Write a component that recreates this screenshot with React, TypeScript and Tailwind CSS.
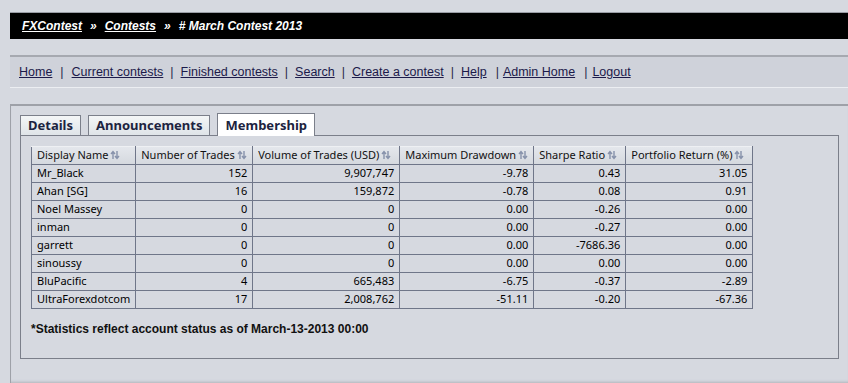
import React from 'react'

const rows = [
  ['Mr_Black', '152', '9,907,747', '-9.78', '0.43', '31.05'],
  ['Ahan [SG]', '16', '159,872', '-0.78', '0.08', '0.91'],
  ['Noel Massey', '0', '0', '0.00', '-0.26', '0.00'],
  ['inman', '0', '0', '0.00', '-0.27', '0.00'],
  ['garrett', '0', '0', '0.00', '-7686.36', '0.00'],
  ['sinoussy', '0', '0', '0.00', '0.00', '0.00'],
  ['BluPacific', '4', '665,483', '-6.75', '-0.37', '-2.89'],
  ['UltraForexdotcom', '17', '2,008,762', '-51.11', '-0.20', '-67.36'],
]

const cols = [
  { label: 'Display Name', w: 'w-[103px]' },
  { label: 'Number of Trades', w: 'w-[117px]' },
  { label: 'Volume of Trades (USD)', w: 'w-[147px]' },
  { label: 'Maximum Drawdown', w: 'w-[134px]' },
  { label: 'Sharpe Ratio', w: 'w-[92px]' },
  { label: 'Portfolio Return (%)', w: 'w-[127px]' },
]

function SortIcon() {
  return (
    <svg width="10" height="10" viewBox="0 0 10 10" className="inline-block ml-[2px] -mt-[3px]">
      <path d="M3 9V2M1 4l2-2.5L5 4" stroke="#8792ab" strokeWidth="1.4" fill="none" />
      <path d="M7 1v7M5 6l2 2.5L9 6" stroke="#8792ab" strokeWidth="1.4" fill="none" />
    </svg>
  )
}

// gaps after each link, the original page spaces them unevenly
const navLinks = [
  { l: 'Home', sep: 'mx-[8px]' },
  { l: 'Current contests', sep: 'mx-[7px]' },
  { l: 'Finished contests', sep: 'mx-[7px]' },
  { l: 'Search', sep: 'mx-[7px]' },
  { l: 'Create a contest', sep: 'mx-[7px]' },
  { l: 'Help', sep: 'ml-[9px] mr-[4px]' },
  { l: 'Admin Home', sep: 'ml-[9px] mr-[5px]' },
  { l: 'Logout', sep: '' },
]

export default function App() {
  return (
    <div className="w-[848px] h-[383px] overflow-hidden bg-[#d6d9e0] pt-3 pl-[10px]" style={{ fontFamily: '"Liberation Sans", Arial, sans-serif' }}>
      {/* breadcrumb bar */}
      <div className="h-[27px] bg-black border-t border-[#9a9da5] flex items-center pl-3 text-white text-[12px] font-bold italic">
        <span className="underline">FXContest</span>
        <span className="mx-[8px]">»</span>
        <span className="underline">Contests</span>
        <span className="mx-[8px]">»</span>
        <span># March Contest 2013</span>
      </div>

      {/* nav */}
      <div className="mt-4 h-[33px] border-t-2 border-[#a6a9b0] border-b border-b-[#eceef2] bg-[#cfd2da] flex items-center pl-[9px] text-[12.5px] text-[#1c1a4a]">
        {navLinks.map((n, i) => (
          <React.Fragment key={n.l}>
            <span className="underline">{n.l}</span>
            {i < navLinks.length - 1 && <span className={`${n.sep} text-[#2a1f4a]`}>|</span>}
          </React.Fragment>
        ))}
      </div>

      {/* main panel */}
      <div className="mt-4 h-[280px] border-t-2 border-l border-[#9ea1a8] bg-[#d6d9e0] pl-[9px] pt-[6px] shadow-[inset_0_-4px_3px_-2px_#b0b3ba]">
        <div className="flex items-end gap-[7px] h-[23px]" style={{ fontFamily: '"Noto Sans", "Open Sans", sans-serif' }}>
          <div className="h-[20px] px-[7px] border border-b-0 border-[#7b7f8a] bg-gradient-to-b from-[#f4f6f7] to-[#dfe4e8] text-[13px] font-bold text-[#1c2340] leading-[19px]">Details</div>
          <div className="h-[20px] px-[7px] border border-b-0 border-[#7b7f8a] bg-gradient-to-b from-[#f4f6f7] to-[#dfe4e8] text-[13px] font-bold text-[#1c2340] leading-[19px]">Announcements</div>
          <div className="h-[23px] px-[7px] border border-b-0 border-[#7b7f8a] bg-white text-[13px] font-bold text-[#1c2340] leading-[23px] relative top-[1px] z-10">Membership</div>
        </div>
        <div className="w-[819px] h-[224px] border border-[#7b7f8a] bg-[#d6d9e0] pl-[10px] pt-[10px]">
          <table className="border-collapse text-[11px] text-black" style={{ fontFamily: '"Noto Sans", "Open Sans", sans-serif' }}>
            <thead>
              <tr className="h-[18px] bg-gradient-to-b from-[#e4e7ec] to-[#d4d8de]">
                {cols.map(c => (
                  <th key={c.label} className={`${c.w} border border-[#6f7689] border-t-[#eef0f3] text-left font-normal px-[5px] whitespace-nowrap text-[#111]`}>
                    {c.label}<SortIcon />
                  </th>
                ))}
              </tr>
            </thead>
            <tbody>
              {rows.map(r => (
                <tr key={r[0]} className="h-[18px]">
                  {r.map((v, i) => (
                    <td key={i} className={`border border-[#6f7689] px-[5px] whitespace-nowrap ${i === 0 ? 'text-left' : 'text-right'}`}>{v}</td>
                  ))}
                </tr>
              ))}
            </tbody>
          </table>
          <div className="mt-[11px] text-[12px] font-bold text-[#111]">*Statistics reflect account status as of March-13-2013 00:00</div>
        </div>
      </div>
    </div>
  )
}
